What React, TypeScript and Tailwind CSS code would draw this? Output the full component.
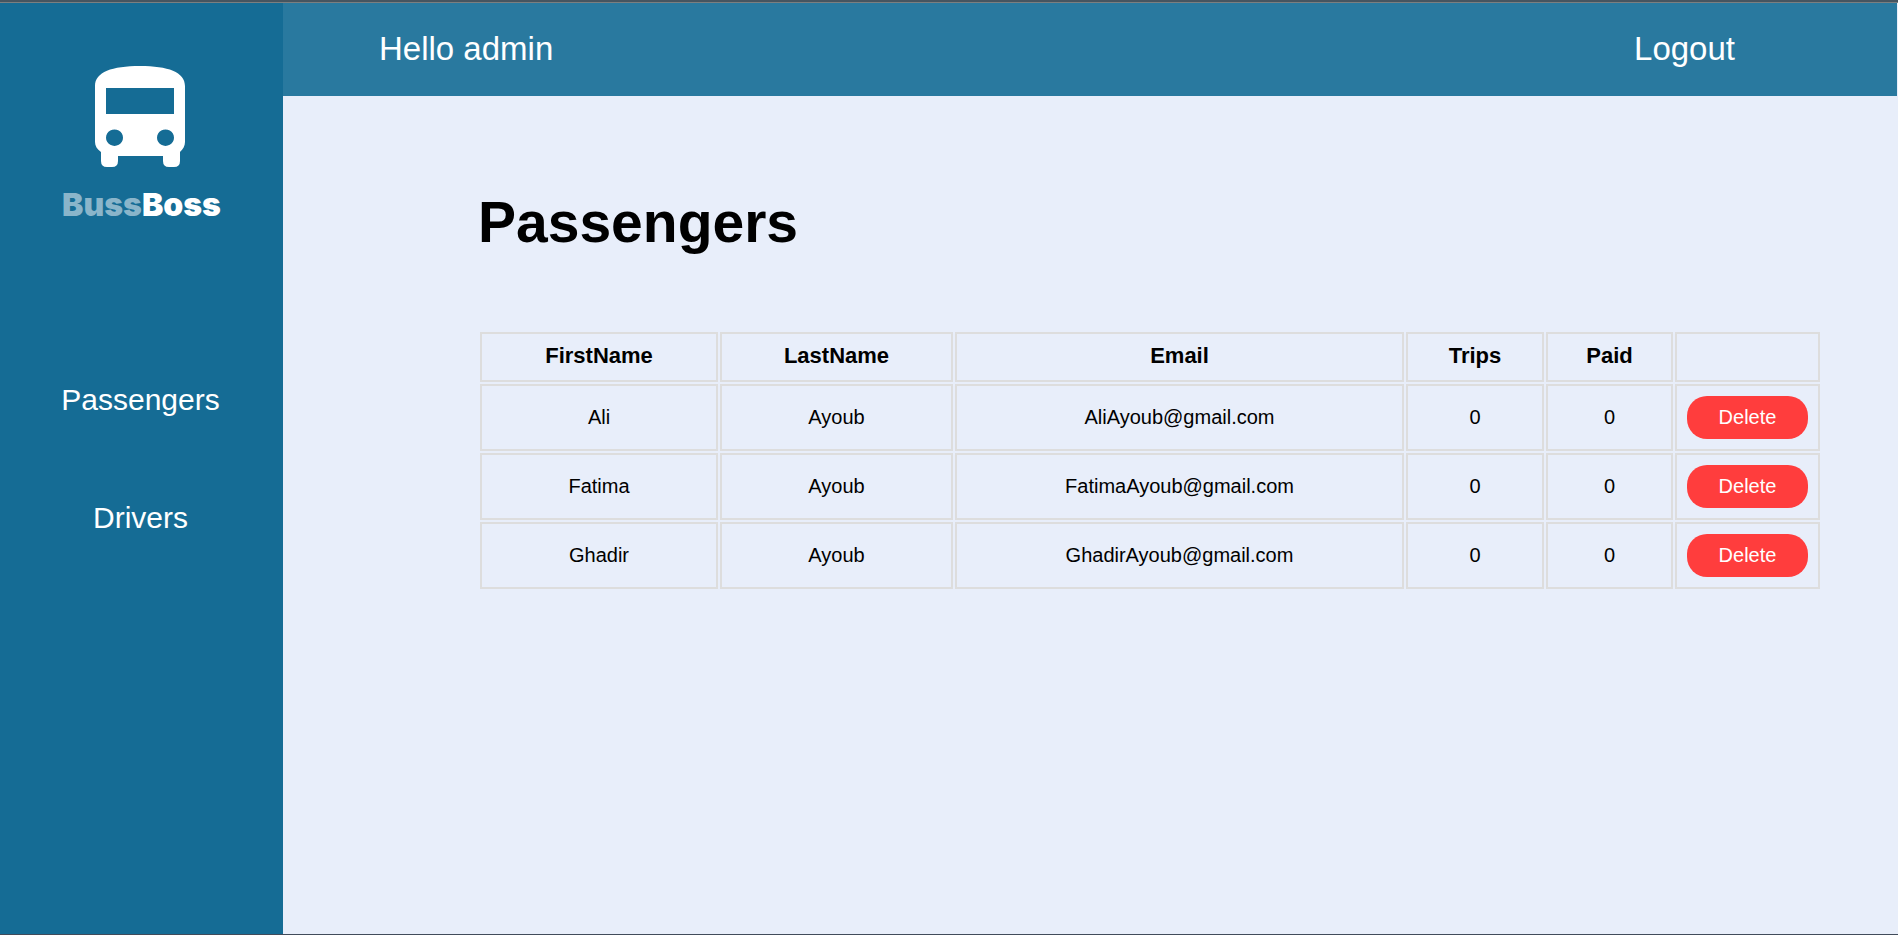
const passengers = [
  { first: "Ali", last: "Ayoub", email: "AliAyoub@gmail.com", trips: 0, paid: 0 },
  { first: "Fatima", last: "Ayoub", email: "FatimaAyoub@gmail.com", trips: 0, paid: 0 },
  { first: "Ghadir", last: "Ayoub", email: "GhadirAyoub@gmail.com", trips: 0, paid: 0 },
];

const headCell = "h-[50px] border-2 border-[#dddddd] p-0 pb-0.5 text-[22px] leading-7 font-bold";
const bodyCell = "border-2 border-[#dddddd] p-2.5";

function Logo() {
  return (
    <div className="flex flex-col items-center">
      <svg viewBox="0 0 93 101" className="h-[101px] w-[93px]" aria-hidden="true">
        <path
          fill="#fff"
          fillRule="evenodd"
          d="M0 20C0 6 17 0 45 0s45 6 45 20v56c0 4-2 7-5 10v9q0 6-6 6h-5q-6 0-6-6v-5H23v5q0 6-6 6h-5q-6 0-6-6v-9c-4-3-6-6-6-10zM11 22v26h68V22zM19.500 63.500a8.500 8.200 0 1 0 .01 0zM70.500 63.500a8.500 8.200 0 1 0 .01 0z"
        />
      </svg>
      <div className="mt-[18px] font-['Inter'] text-[32px] leading-10 font-black text-white">
        <span className="text-[#8ab5ca]">Buss</span>Boss
      </div>
    </div>
  );
}

export default function App() {
  return (
    <div className="flex min-h-screen flex-col border-b border-[#414b5a] bg-[#e8eefa] font-['Liberation_Sans',Arial,sans-serif] text-black">
      <div className="h-[3px] border-b border-[#7b7f80] bg-[#465560]" />
      <div className="flex grow">
        <aside className="flex w-[283px] shrink-0 flex-col items-center bg-[#156c95] pt-[63px] text-white">
          <Logo />
          <nav className="mt-[158px] flex flex-col items-center gap-[84px] pr-0.5 text-[30px] leading-[34px]">
            <a href="#passengers">Passengers</a>
            <a href="#drivers">Drivers</a>
          </nav>
        </aside>
        <div className="flex grow flex-col">
          <header className="mr-px flex h-[93px] items-center justify-between bg-[#29799f] pr-[162px] pb-0.5 pl-24 text-[33px] leading-9 text-white">
            <span>Hello admin</span>
            <a href="#logout">Logout</a>
          </header>
          <main className="pt-[93px] pr-[76px] pl-[195px]">
            <h1 className="text-[57px] leading-[66px] font-bold">Passengers</h1>
            <table className="mt-[75px] w-full table-fixed border-separate border-spacing-0.5 text-center text-xl leading-[23px]">
              <colgroup>
                <col className="w-[238px]" />
                <col className="w-[233px]" />
                <col className="w-[449px]" />
                <col className="w-[138px]" />
                <col className="w-[127px]" />
                <col className="w-[145px]" />
              </colgroup>
              <thead>
                <tr>
                  <th className={headCell}>FirstName</th>
                  <th className={headCell}>LastName</th>
                  <th className={headCell}>Email</th>
                  <th className={headCell}>Trips</th>
                  <th className={headCell}>Paid</th>
                  <th className={headCell}></th>
                </tr>
              </thead>
              <tbody>
                {passengers.map((p) => (
                  <tr key={p.email}>
                    <td className={bodyCell}>{p.first}</td>
                    <td className={bodyCell}>{p.last}</td>
                    <td className={bodyCell}>{p.email}</td>
                    <td className={bodyCell}>{p.trips}</td>
                    <td className={bodyCell}>{p.paid}</td>
                    <td className={bodyCell}>
                      <button type="button" className="block h-[43px] w-full rounded-[20px] bg-[#ff3d3d] text-white">
                        Delete
                      </button>
                    </td>
                  </tr>
                ))}
              </tbody>
            </table>
          </main>
        </div>
      </div>
    </div>
  );
}
